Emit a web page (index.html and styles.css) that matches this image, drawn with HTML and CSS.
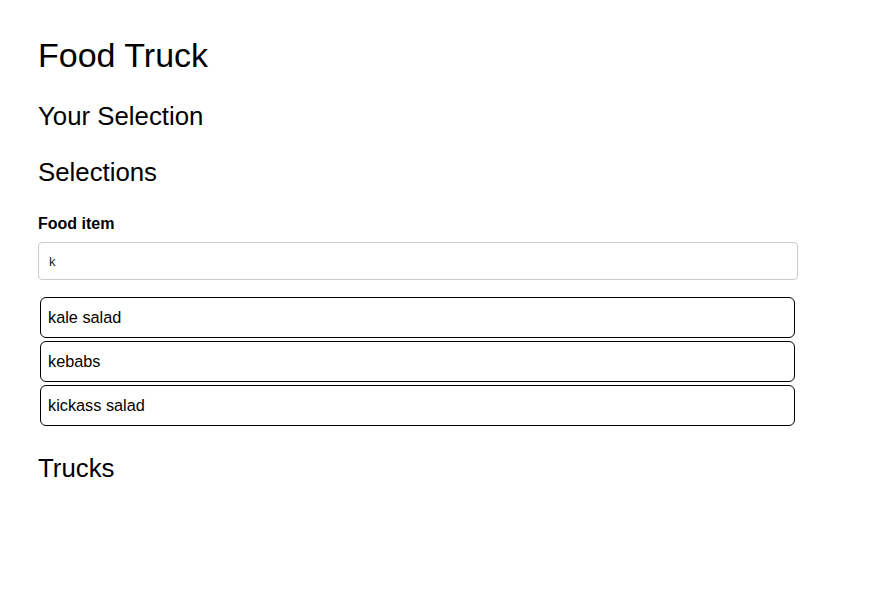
FILE: index.html
```html
<!DOCTYPE html>
<html lang="en">
<head>
<meta charset="utf-8">
<title>Food Truck</title>
<link rel="stylesheet" href="styles.css">
</head>
<body>
<main class="app">
  <h1 class="title">Food Truck</h1>
  <h2 class="section">Your Selection</h2>
  <h2 class="section">Selections</h2>
  <label class="field-label" for="food">Food item</label>
  <input id="food" class="field-input" type="text" value="k">
  <ul class="suggestions">
    <li class="suggestion">kale salad</li>
    <li class="suggestion">kebabs</li>
    <li class="suggestion">kickass salad</li>
  </ul>
  <h2 class="section trucks">Trucks</h2>
</main>
</body>
</html>
```
FILE: styles.css
```css
* { box-sizing: border-box; }
html, body { margin: 0; padding: 0; background: #fff; }
body {
  font-family: "Liberation Sans", Arial, sans-serif;
  color: #000;
  font-size: 16px;
}
.app {
  width: 798px;
  padding: 35px 0 0 38px;
  display: flex;
  flex-direction: column;
  align-items: stretch;
}
.title {
  margin: 0;
  font-size: 34px;
  line-height: 40px;
  font-weight: normal;
}
.section {
  margin: 26px 0 0 0;
  font-size: 25.8px;
  line-height: 30px;
  font-weight: normal;
}
.field-label {
  margin-top: 27px;
  font-weight: bold;
  font-size: 16px;
  line-height: 20px;
}
.field-input {
  margin-top: 8px;
  height: 38px;
  width: 100%;
  border: 1px solid #ccc;
  border-radius: 4px;
  padding: 0 10px;
  font-family: "Liberation Sans", Arial, sans-serif;
  font-size: 13px;
  color: #222;
  outline: none;
}
.suggestions {
  list-style: none;
  margin: 17px 3px 0 2px;
  padding: 0;
  display: flex;
  flex-direction: column;
  gap: 3px;
}
.suggestion {
  height: 41px;
  border: 1px solid #000;
  border-radius: 6px;
  padding: 0 7px;
  display: flex;
  align-items: center;
  font-size: 16.3px;
}
.trucks {
  margin-top: 27px;
}
```
